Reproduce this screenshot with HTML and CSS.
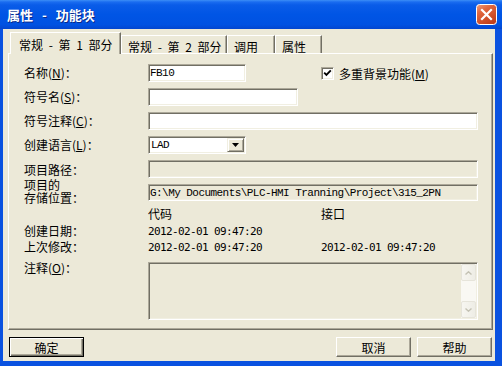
FILE: index.html
```html
<!DOCTYPE html>
<html lang="zh-CN">
<head>
  <meta charset="UTF-8" />
  <title>属性 - 功能块</title>
  <link rel="stylesheet" href="styles.css">
</head>
<body>
  <div class="window">
    <div class="titlebar">
      <span class="title">属性 - 功能块</span>
      <span class="close">
        <svg width="21" height="21" viewBox="0 0 21 21">
          <defs>
            <linearGradient id="cg" x1="0" y1="0" x2="0.6" y2="1">
              <stop offset="0" stop-color="#f0a080"/>
              <stop offset="0.35" stop-color="#e2683f"/>
              <stop offset="1" stop-color="#c2401c"/>
            </linearGradient>
          </defs>
          <rect x="0.5" y="0.5" width="20" height="20" rx="3" fill="url(#cg)" stroke="#fff"/>
          <path d="M6 6 L15 15 M15 6 L6 15" stroke="#fff" stroke-width="2.2" stroke-linecap="square"/>
        </svg>
      </span>
    </div>

    <div class="dialog">
      <div class="tabs">
        <div class="tab active tab-1">常规 - 第 1 部分</div>
        <div class="tab tab-2">常规 - 第 2 部分</div>
        <div class="tab tab-3">调用</div>
        <div class="tab tab-4">属性</div>
      </div>

      <div class="panel">
        <div class="row">
          <span class="label">名称(<u>N</u>)：</span>
          <div class="field mono w-short">FB10</div>
          <span class="check">
            <span class="checkbox">
              <svg width="9" height="9" viewBox="0 0 9 9"><path d="M1.2 3.6 L3.4 5.8 L7.8 1.4" fill="none" stroke="#000" stroke-width="1.9"/></svg>
            </span>
            <span>多重背景功能(<u>M</u>)</span>
          </span>
        </div>
        <div class="row">
          <span class="label">符号名(<u>S</u>)：</span>
          <div class="field w-mid"></div>
        </div>
        <div class="row">
          <span class="label">符号注释(<u>C</u>)：</span>
          <div class="field w-long"></div>
        </div>
        <div class="row">
          <span class="label">创建语言(<u>L</u>)：</span>
          <div class="field select mono w-short">
            <span class="select-text">LAD</span>
            <span class="select-btn">
              <svg width="7" height="4" viewBox="0 0 7 4"><path d="M0 0 H7 L3.5 4 Z" fill="#000"/></svg>
            </span>
          </div>
        </div>
        <div class="row row-path">
          <span class="label">项目路径：</span>
          <div class="field disabled w-long"></div>
        </div>
        <div class="row row-tall">
          <span class="label label-2l"><span class="line">项目的</span><span class="line">存储位置：</span></span>
          <div class="field disabled mono w-long path">G:\My Documents\PLC-HMI Tranning\Project\315_2PN</div>
        </div>
        <div class="row row-info row-head">
          <span class="label"></span>
          <span class="col">代码</span>
          <span class="col">接口</span>
        </div>
        <div class="row row-info row-created">
          <span class="label">创建日期：</span>
          <span class="col date">2012-02-01 09:47:20</span>
        </div>
        <div class="row row-info">
          <span class="label">上次修改：</span>
          <span class="col date">2012-02-01 09:47:20</span>
          <span class="col date">2012-02-01 09:47:20</span>
        </div>
        <div class="row row-memo">
          <span class="label">注释(<u>O</u>)：</span>
          <div class="field memo w-long">
            <div class="scrollbar">
              <span class="sb-btn">
                <svg width="7" height="4" viewBox="0 0 7 4"><path d="M0.5 3.5 L3.5 0.8 L6.5 3.5" fill="none" stroke="#c4c2b4" stroke-width="1.4"/></svg>
              </span>
              <span class="sb-btn">
                <svg width="7" height="4" viewBox="0 0 7 4"><path d="M0.5 0.5 L3.5 3.2 L6.5 0.5" fill="none" stroke="#c4c2b4" stroke-width="1.4"/></svg>
              </span>
            </div>
          </div>
        </div>
      </div>

      <div class="buttons">
        <button class="btn btn-default">确定</button>
        <div class="btn-group">
          <button class="btn">取消</button>
          <button class="btn">帮助</button>
        </div>
      </div>
    </div>
  </div>
</body>
</html>
```

FILE: styles.css
```css
html, body {
  margin: 0;
  padding: 0;
  font-family: "Noto Sans CJK SC", "DejaVu Sans", sans-serif;
  font-size: 12px;
  color: #000;
}

.window {
  width: 502px;
  height: 366px;
  display: flex;
  flex-direction: column;
  background: #0a52e0;
}

/* title bar */
.titlebar {
  height: 29px;
  flex-shrink: 0;
  display: flex;
  align-items: center;
  justify-content: space-between;
  padding: 0 5px 0 7px;
  background: linear-gradient(to bottom, #3c8ef6 0, #1a6cf0 2px, #0a5ce8 5px, #0055e5 50%, #0052e2 85%, #0346cf 100%);
}
.title {
  color: #fff;
  font-size: 13px;
  font-weight: 700;
  word-spacing: 6px;
  text-shadow: 1px 1px 0 #0a2a8a;
  line-height: 29px;
  white-space: pre;
}
.close {
  width: 21px;
  height: 21px;
  display: flex;
}

/* dialog body */
.dialog {
  flex: 1;
  display: flex;
  flex-direction: column;
  background: #ece9d8;
  margin: 0 7px 5px 3px;
  padding: 0 2px 0 5px;
}

.tabs {
  height: 24px;
  display: flex;
  align-items: flex-end;
  padding-left: 2px;
}
.tab {
  box-sizing: border-box;
  height: 18px;
  line-height: 21px;
  padding-left: 6px;
  border-top: 1px solid #fff;
  border-left: 1px solid #fff;
  border-right: 1px solid #716f64;
  box-shadow: inset -1px 0 0 #aca899;
  white-space: pre;
  word-spacing: 3px;
}
.tab.active {
  height: 22px;
  line-height: 23px;
  padding-left: 8px;
  margin-bottom: -1px;
  position: relative;
  z-index: 1;
  background: #ece9d8;
}
.tab-1 { width: 111px; }
.tab-2 { width: 106px; }
.tab-3 { width: 48px; }
.tab-4 { width: 47px; }

.panel {
  box-sizing: border-box;
  height: 277px;
  display: flex;
  flex-direction: column;
  padding: 10px 0 0 15px;
  border-top: 1px solid #fff;
  border-left: 1px solid #fff;
  border-right: 1px solid #716f64;
  border-bottom: 1px solid #716f64;
  box-shadow: inset -1px -1px 0 #aca899;
}

.row {
  display: flex;
  align-items: center;
  height: 18px;
  margin-bottom: 6px;
  flex-shrink: 0;
}
.label {
  width: 124px;
  flex-shrink: 0;
  white-space: nowrap;
  line-height: 14px;
}
.row-path .label {
  margin-top: 2px;
}
.row-tall {
  height: 28px;
  align-items: flex-start;
  margin-top: -8px;
  margin-bottom: 1px;
}
.label-2l {
  display: flex;
  flex-direction: column;
  line-height: 13px;
  padding-top: 2px;
}
.row-tall .field {
  margin-top: 8px;
  height: 17px;
}
.row-info {
  height: 16px;
  margin-bottom: 0;
}
.row-head {
  margin-bottom: 2px;
}
.col {
  width: 173px;
  flex-shrink: 0;
}
.date {
  font-family: "DejaVu Sans Mono", monospace;
  font-size: 11px;
  letter-spacing: -0.62px;
}
.row-memo {
  height: 59px;
  margin-top: 6px;
  align-items: flex-start;
}

/* inputs */
.field {
  box-sizing: border-box;
  height: 18px;
  padding-left: 1px;
  background: #fff;
  border: 1px solid;
  border-color: #aca899 #fff #fff #aca899;
  box-shadow: inset 1px 1px 0 #716f64, inset -1px -1px 0 #f1efe2;
  line-height: 16px;
  white-space: nowrap;
  overflow: hidden;
}
.mono {
  font-family: "Liberation Mono", monospace;
  font-size: 11px;
  letter-spacing: -0.55px;
}
.disabled {
  background: #ece9d8;
}
.w-short { width: 98px; }
.w-mid { width: 150px; }
.w-long { width: 330px; }

.select {
  display: flex;
  justify-content: space-between;
  padding: 1px;
}
.select-text {
  margin-left: 1px;
  line-height: 14px;
}
.select-btn {
  box-sizing: border-box;
  width: 17px;
  height: 14px;
  display: flex;
  align-items: center;
  justify-content: center;
  background: #ece9d8;
  border: 1px solid;
  border-color: #f1efe2 #716f64 #716f64 #f1efe2;
  box-shadow: inset 1px 1px 0 #fff, inset -1px -1px 0 #aca899;
}

.check {
  display: flex;
  align-items: center;
  margin-left: 75px;
  gap: 5px;
  white-space: nowrap;
}
.checkbox {
  box-sizing: border-box;
  width: 13px;
  height: 13px;
  display: flex;
  align-items: center;
  justify-content: center;
  background: #fff;
  border: 1px solid;
  border-color: #aca899 #fff #fff #aca899;
  box-shadow: inset 1px 1px 0 #716f64, inset -1px -1px 0 #f1efe2;
}

.memo {
  height: 58px;
  margin-top: 1px;
  display: flex;
  justify-content: flex-end;
  padding: 1px;
  background: #ece9d8;
}
.scrollbar {
  width: 15px;
  display: flex;
  flex-direction: column;
  justify-content: space-between;
  background: #f9f8f3;
}
.sb-btn {
  box-sizing: border-box;
  height: 17px;
  display: flex;
  align-items: center;
  justify-content: center;
  border: 1px solid #e6e4da;
  border-radius: 2px;
  background: linear-gradient(to right, #f7f6f1, #eeede5);
}

/* bottom buttons */
.buttons {
  display: flex;
  justify-content: space-between;
  padding: 7px 1px 0;
}
.btn-group {
  display: flex;
  gap: 6px;
}
.btn {
  box-sizing: border-box;
  width: 75px;
  height: 20px;
  padding: 0;
  font-family: inherit;
  font-size: 12px;
  color: #000;
  background: #ece9d8;
  border: 1px solid;
  border-color: #fff #716f64 #716f64 #fff;
  box-shadow: inset -1px -1px 0 #aca899;
}
.btn-default {
  border: 1px solid #000;
  box-shadow: inset 1px 1px 0 #fff, inset -1px -1px 0 #716f64, inset -2px -2px 0 #aca899;
}
```
